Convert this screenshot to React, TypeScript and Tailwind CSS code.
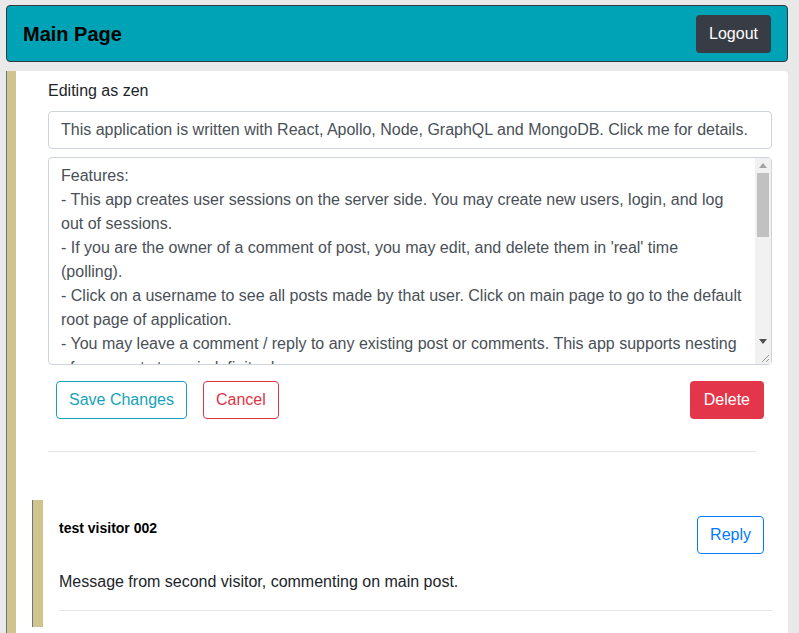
import { useState } from "react"

const details = `Features:
- This app creates user sessions on the server side. You may create new users, login, and log out of sessions.
- If you are the owner of a comment of post, you may edit, and delete them in 'real' time (polling).
- Click on a username to see all posts made by that user. Click on main page to go to the default root page of application.
- You may leave a comment / reply to any existing post or comments. This app supports nesting of comments to an indefinite degree.
- Comments are loaded recursively, each reply is shown below the comment it belongs to.
- Only logged in users may create posts, comments or replies.

Technologies:
- React for the client side user interface.
- Apollo Client for querying and caching data from the GraphQL server.
- Node and Express with Apollo Server on the server side.
- MongoDB for storing users, posts and comments.
- Bootstrap for styling.`

function FakeScrollbar() {
  // headless browser hides native scrollbars, so draw one over the textarea
  return (
    <div className="pointer-events-none absolute bottom-px right-px top-px flex w-[16px] flex-col bg-[#f1f1f1]">
      <div className="flex h-[15px] items-center justify-center">
        <svg width="8" height="5" viewBox="0 0 8 5">
          <polygon points="0,5 8,5 4,0" fill="#a3a3a3" />
        </svg>
      </div>
      <div className="flex-1">
        <div className="mx-[2px] h-[64px] bg-[#c1c1c1]" />
      </div>
      <div className="flex h-[15px] items-center justify-center">
        <svg width="8" height="5" viewBox="0 0 8 5">
          <polygon points="0,0 8,0 4,5" fill="#505050" />
        </svg>
      </div>
      <div className="flex h-[15px] items-end justify-end bg-[#f1f1f1] pb-[2px] pr-[2px]">
        <svg width="8" height="8" viewBox="0 0 8 8">
          <line x1="1" y1="8" x2="8" y2="1" stroke="#9a9a9a" strokeWidth="1" />
          <line x1="5" y1="8" x2="8" y2="5" stroke="#9a9a9a" strokeWidth="1" />
        </svg>
      </div>
    </div>
  )
}

export default function App() {
  const [title, setTitle] = useState(
    "This application is written with React, Apollo, Node, GraphQL and MongoDB. Click me for details."
  )
  const [body, setBody] = useState(details)

  return (
    <div className="min-h-screen bg-[#e9e9e9] pl-[6px] pr-[11px] pt-[5px] font-['Liberation_Sans',Arial,sans-serif] text-[16px] leading-6 text-[#212529]">
      {/* HEADER */}
      <div className="flex h-[57px] items-center justify-between rounded-[4px] border border-[#343a40] bg-[#00a2b5] pl-4 pr-4">
        <span className="text-[20px] font-bold text-black">Main Page</span>
        <button className="h-[38px] rounded-[4px] bg-[#383d45] px-[13px] text-white">Logout</button>
      </div>

      {/* POST CARD */}
      <div className="ml-px mt-[9px] rounded-tr-[4px] border-l-[9px] border-l-[#cfc48d] bg-white pb-10 shadow-[-1px_0_0_0_#6c757d]">
        <div className="pl-8 pr-4 pt-[8px]">
          <div className="mb-[8px]">Editing as zen</div>
          <input
            value={title}
            onChange={(e) => setTitle(e.target.value)}
            className="block h-[38px] w-full rounded-[4px] border border-[#ced4da] px-3 text-[#495057] outline-none"
          />
          <div className="relative mt-2">
            <textarea
              value={body}
              onChange={(e) => setBody(e.target.value)}
              className="block h-[208px] w-full resize-none overflow-y-scroll rounded-[4px] border border-[#ced4da] py-[6px] pl-3 pr-[28px] leading-6 text-[#495057] outline-none"
            />
            <FakeScrollbar />
          </div>
          <div className="mt-4 flex px-2">
            <button className="h-[38px] rounded-[4px] border border-[#17a2b8] px-3 text-[#17a2b8]">Save Changes</button>
            <button className="ml-4 h-[38px] rounded-[4px] border border-[#dc3545] px-3 text-[#dc3545]">Cancel</button>
            <button className="ml-auto h-[38px] rounded-[4px] bg-[#e3364a] px-[14px] text-white">Delete</button>
          </div>
          <div className="mr-4 mt-8 border-t border-[#e5e5e5]" />
        </div>

        {/* COMMENT */}
        <div className="ml-[17px] mt-12 border-l-[10px] border-l-[#cfc48d] bg-white pb-4 pl-4 pr-4 pt-4 shadow-[-1px_0_0_0_#6c757d]">
          <div className="flex items-start justify-between pr-2">
            <span className="pt-[2px] text-[14px] font-bold leading-5 text-black">test visitor 002</span>
            <button className="h-[38px] rounded-[4px] border border-[#007bff] px-3 text-[#007bff]">Reply</button>
          </div>
          <div className="mt-[16px]">Message from second visitor, commenting on main post.</div>
          <div className="mt-[16px] border-t border-[#e5e5e5]" />
        </div>
      </div>
    </div>
  )
}
